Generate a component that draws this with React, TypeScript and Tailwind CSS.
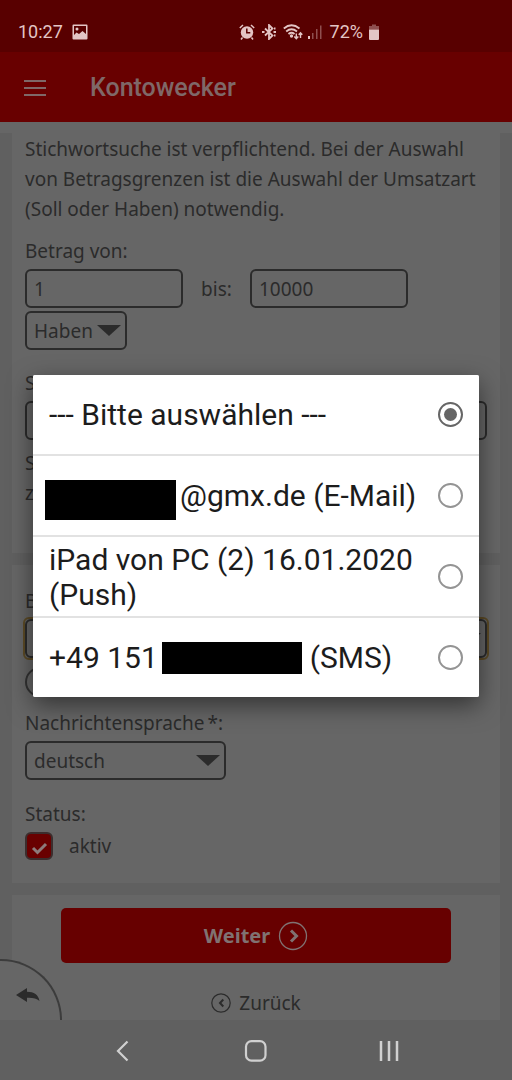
import React, { useState } from 'react';

const OPTIONS = [
  { id: 'none', text: '--- Bitte auswählen ---' },
  { id: 'mail', bar: 'w-[131px] h-10 -ml-1 mr-1 mt-2', after: '@gmx.de (E-Mail)' },
  { id: 'push', text: 'iPad von PC (2) 16.01.2020 (Push)' },
  { id: 'sms', text: '+49 151', bar: 'w-[140px] h-8 ml-1 mr-2', after: '(SMS)' },
];

export default function App() {
  return (
    <div className="relative min-h-screen flex flex-col bg-[#606060] font-['Noto_Sans',sans-serif] text-[19px] leading-[30px] text-[#2b2b2b]">
      <StatusBar />
      <Header />

      <main className="flex-1 flex flex-col gap-3 px-3 border-t-[11px] border-[#666666]">
        {/* Betrag und Stichwort */}
        <section className="bg-[#666666] px-[13px] pt-px pb-[45px]">
          <p>
            Stichwortsuche ist verpflichtend. Bei der Auswahl<br />
            von Betragsgrenzen ist die Auswahl der Umsatzart<br />
            (Soll oder Haben) notwendig.
          </p>
          <label htmlFor="von" className="block mt-3 mb-[3px]">Betrag von:</label>
          <div className="flex items-center">
            <TextField id="von" value="1" />
            <label htmlFor="bis" className="w-[67px] text-center">bis:</label>
            <TextField id="bis" value="10000" />
          </div>
          <div className="w-[102px] mt-[3px]">
            <SelectField id="umsatzart" label="Umsatzart" options={['Haben', 'Soll']} />
          </div>
          <label htmlFor="stichwort" className="block mt-[18px] mb-[3px]">Stichwort:</label>
          <input id="stichwort" className="block w-full h-[39px] rounded-md border-2 border-[#2b2b2b] px-2" />
          <p className="mt-2">
            Stichworte<br />
            zeilenweise
          </p>
        </section>

        {/* Benachrichtigung */}
        <section className="bg-[#666666] px-[13px] pt-[21px] pb-[22px]">
          <label htmlFor="weg" className="block mb-[3px]">Benachrichtigung:</label>
          <div className="outline-2 outline-[#5c4a26] rounded-sm">
            <SelectField id="weg" label="Benachrichtigungsweg" options={['']} />
          </div>
          <button aria-label="Hilfe" className="block size-[30px] mt-[9px] mb-[11px] rounded-full border-2 border-[#333333]" />
          <label htmlFor="sprache" className="block mb-[3px]">Nachrichtensprache&thinsp;*:</label>
          <div className="w-[201px]">
            <SelectField id="sprache" label="Nachrichtensprache" options={['deutsch', 'englisch']} />
          </div>
          <div className="mt-[19px]">Status:</div>
          <label className="flex items-center gap-4 mt-[2px]">
            <span className="relative flex">
              <input type="checkbox" defaultChecked className="size-7 appearance-none rounded-md border-2 border-[#3c2e2e] checked:bg-[#690000]" />
              <svg viewBox="0 0 28 28" className="absolute inset-0 size-7 pointer-events-none" fill="none" stroke="#8c7b7b" strokeWidth="3">
                <path d="M8 16l4.500 4.500 8.500-8.500" />
              </svg>
            </span>
            aktiv
          </label>
        </section>

        {/* Aktionen */}
        <section className="flex-1 flex flex-col items-center bg-[#666666] px-[49px] pt-[13px] pb-0">
          <button className="w-full h-[55px] flex items-center justify-center gap-2 rounded-[5px] bg-[#670000] text-xl font-bold text-[#807272]">
            Weiter
            <svg viewBox="0 0 30 30" className="size-[30px]" fill="none" stroke="currentColor">
              <circle cx="15" cy="15" r="13.500" strokeWidth="1.300" />
              <path d="M13 9.500l5.500 5.500-5.500 5.500" strokeWidth="3" />
            </svg>
          </button>
          <a href="#zurueck" className="flex items-center gap-2 mt-[25px]">
            <svg viewBox="0 0 20 20" className="size-5" fill="none" stroke="currentColor">
              <circle cx="10" cy="10" r="9.200" strokeWidth="1.200" />
              <path d="M12.300 6.500L9 10l3.300 3.500" strokeWidth="2" />
            </svg>
            Zurück
          </a>
        </section>
      </main>

      <NavBar />
      <ChoiceDialog />
    </div>
  );
}

function StatusBar() {
  return (
    <div className="h-[52px] flex items-center pt-3 px-[18px] bg-[#580000] font-[Roboto,sans-serif] text-lg text-[#e3c5c5]">
      <span>10:27</span>
      <svg viewBox="0 0 16 16" className="size-4 ml-[9px]" fill="currentColor" fillRule="evenodd">
        <path d="M1.500 0.500h13a1 1 0 0 1 1 1v13a1 1 0 0 1-1 1h-13a1 1 0 0 1-1-1v-13a1 1 0 0 1 1-1zM2 2v9l2.500-2.500 2.500 1.500L10.500 7l3.500 3V2zM5 3.500a1.500 1.500 0 1 1 0 3 1.500 1.500 0 0 1 0-3z" />
      </svg>
      <div className="flex items-center ml-auto mr-[115px]">
        <svg viewBox="0 0 16 16" className="size-4">
          <circle cx="8" cy="8.500" r="6.200" fill="currentColor" />
          <path d="M0.800 4L4 1M15.200 4L12 1M3.500 13.500L2 15.500M12.500 13.500l1.500 2" stroke="currentColor" strokeWidth="1.500" />
          <path d="M7.800 4.500v4.300h3.500" fill="none" stroke="#580000" strokeWidth="1.500" />
        </svg>
        <svg viewBox="0 0 14 16" className="w-3.5 h-4 ml-[7px]" fill="none" stroke="currentColor" strokeWidth="1.800">
          <path d="M3 4.500l7.500 7-3.500 3.500V1l3.500 3.500-7.500 7" />
          <path d="M0 8h2.500M11.500 8H14M12 4.500h1.500M12 11.500h1.500" />
        </svg>
        <svg viewBox="0 0 20 16" className="w-5 h-4 ml-[7px]" fill="none" stroke="currentColor" strokeWidth="1.800">
          <path d="M0.800 4.500Q8.500-2 16.500 4.500M3.200 7.500q5.300-4.500 10.800 0M5.500 10q3-2.500 6 0" />
          <circle cx="8.500" cy="12" r="0.800" fill="currentColor" />
          <path d="M13.300 9.500v5M11.300 12.500l2 2.200 2-2.200M17.500 14V9M15.700 10.800l1.800-2 1.800 2" strokeWidth="1.400" />
        </svg>
        <svg viewBox="0 0 14 14" className="size-3.5 ml-[5px]" fill="currentColor">
          <rect x="0" y="11" width="2" height="3" />
          <path d="M4 8h1.500v6H4zM8 4h1.500v10H8zM12 0.500h1.500V14H12z" opacity="0.400" />
        </svg>
        <span className="ml-2">72%</span>
        <svg viewBox="0 0 10 16" className="w-2.5 h-4 ml-[6px]" fill="currentColor">
          <path d="M3 0.500h4V2h3v3.500H0V2h3z" opacity="0.400" />
          <path d="M0 5.500h10V15a1 1 0 0 1-1 1H1a1 1 0 0 1-1-1z" />
        </svg>
      </div>
    </div>
  );
}

function Header() {
  return (
    <header className="h-[70px] flex items-center gap-11 pt-0.5 px-6 bg-[#680000] text-[#7f6868]">
      <button aria-label="Menü" className="flex">
        <svg viewBox="0 0 22 16" className="w-[22px] h-4" stroke="currentColor" strokeWidth="2">
          <path d="M0 1h22M0 8h22M0 15h22" />
        </svg>
      </button>
      <h1 className="font-[Roboto,sans-serif] text-[25px] font-medium">Kontowecker</h1>
    </header>
  );
}

function TextField({ id, value }: { id: string; value: string }) {
  return (
    <input id={id} defaultValue={value} className="w-[158px] h-[39px] rounded-md border-2 border-[#2b2b2b] px-[7px]" />
  );
}

function SelectField({ id, label, options }: { id: string; label: string; options: string[] }) {
  return (
    <div className="relative">
      <select id={id} aria-label={label} className="block w-full h-[39px] appearance-none rounded-md border-2 border-[#2b2b2b] px-[7px]">
        {options.map((o) => (
          <option key={o}>{o}</option>
        ))}
      </select>
      <svg viewBox="0 0 24 11" className="absolute right-[6px] top-[14px] w-6 h-[11px] pointer-events-none" fill="#2b2b2b">
        <path d="M0 0h24L12 11z" />
      </svg>
    </div>
  );
}

function NavBar() {
  return (
    <nav className="relative h-[60px] flex items-center justify-around pt-0.5 px-[56px] text-[#d0d0d0]">
      <button
        aria-label="Rückgängig"
        className="absolute left-0 bottom-full w-[62px] h-[61px] rounded-tr-full border-t-2 border-r-2 border-[#3c3c3c] bg-[#666666]"
      >
        <svg viewBox="0 0 24 14" className="w-6 h-3.5 ml-4 mt-2" fill="#2b2b2b">
          <path d="M0 7L11 0v3.800c7 0 11.500 3 12.500 9.200C20.500 10.300 17 9.500 11 9.700V14z" />
        </svg>
      </button>
      <button aria-label="Zurück" className="flex">
        <svg viewBox="0 0 24 22" className="w-6 h-[22px]" fill="none" stroke="currentColor" strokeWidth="2.200">
          <path d="M16.500 1.500L7 11l9.500 9.500" />
        </svg>
      </button>
      <button aria-label="Start" className="flex">
        <svg viewBox="0 0 24 22" className="w-6 h-[22px]" fill="none" stroke="currentColor" strokeWidth="2.200">
          <rect x="2" y="1.200" width="19.500" height="19.500" rx="5.500" />
        </svg>
      </button>
      <button aria-label="Letzte Apps" className="flex">
        <svg viewBox="0 0 24 22" className="w-6 h-[22px]" stroke="currentColor" strokeWidth="2.500">
          <path d="M4 1v20M12 1v20M20 1v20" />
        </svg>
      </button>
    </nav>
  );
}

function ChoiceDialog() {
  const [selected, setSelected] = useState('none');

  return (
    <div className="absolute inset-0 flex items-center pt-[52px] pb-[60px] px-[33px] pointer-events-none">
      <div
        role="dialog"
        aria-label="Bitte auswählen"
        className="w-full flex flex-col gap-0.5 rounded-xs overflow-hidden bg-[#e2e2e2] shadow-[0_8px_24px_rgba(0,0,0,0.5)] pointer-events-auto font-[Roboto,sans-serif] text-[30px] leading-[35px] text-[#1c1c1c]"
      >
        {OPTIONS.map((o) => (
          <label key={o.id} className="min-h-[79px] flex items-center justify-between gap-4 px-4 bg-white">
            <span className={o.bar ? 'flex items-center whitespace-nowrap' : ''}>
              {o.text}
              {o.bar && <span className={`bg-black ${o.bar}`} />}
              {o.after}
            </span>
            <input
              type="radio"
              name="kanal"
              checked={selected === o.id}
              onChange={() => setSelected(o.id)}
              className="size-[25px] shrink-0 appearance-none rounded-full border-2 border-[#949494] grid place-items-center checked:border-[#666666] checked:before:size-[13px] checked:before:rounded-full checked:before:bg-[#666666] checked:before:content-['']"
            />
          </label>
        ))}
      </div>
    </div>
  );
}
